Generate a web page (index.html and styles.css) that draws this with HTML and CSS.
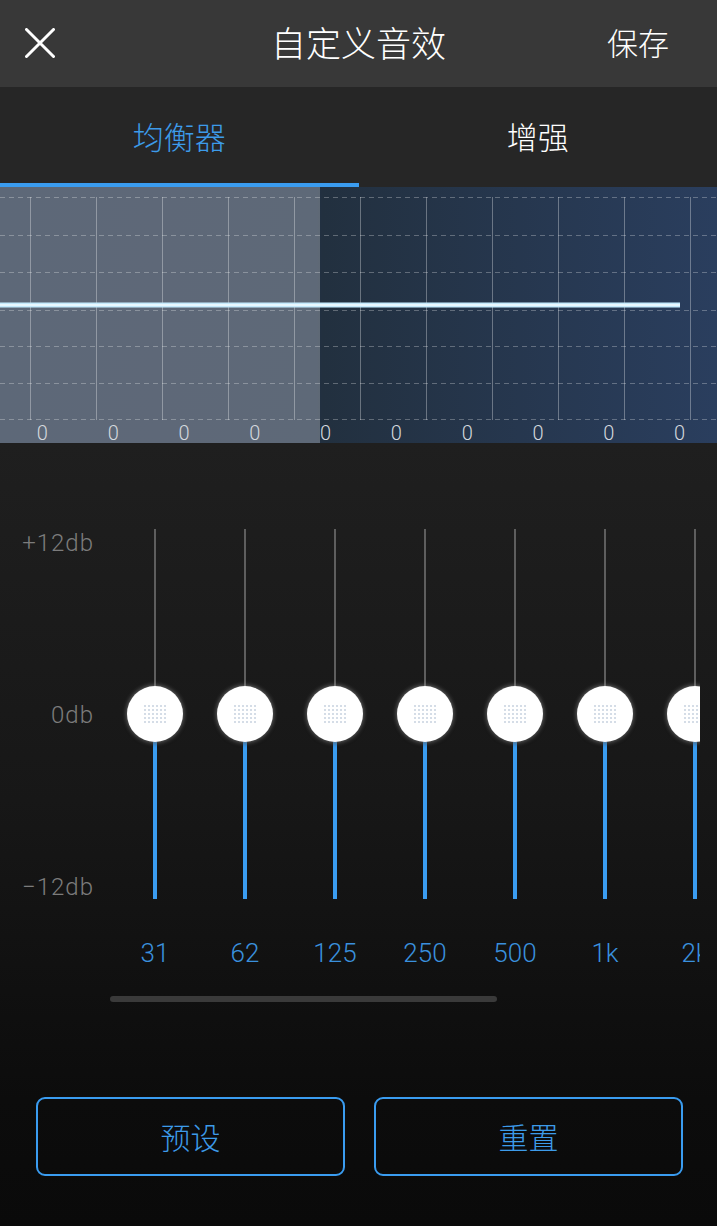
FILE: index.html
```html
<!DOCTYPE html>
<html lang="zh-CN">
<head>
<meta charset="utf-8">
<title>自定义音效</title>
<link rel="stylesheet" href="styles.css">
</head>
<body>
<div class="app">
  <header class="nav">
    <div class="nav-left">
      <svg class="close" width="30" height="30" viewBox="0 0 30 30"><path d="M1.5 1.5 L28.5 28.5 M28.5 1.5 L1.5 28.5" stroke="#fff" stroke-width="3" stroke-linecap="round" fill="none"/></svg>
    </div>
    <h1 class="title">自定义音效</h1>
    <div class="nav-right"><span class="save">保存</span></div>
  </header>

  <nav class="tabs">
    <div class="tab active">均衡器</div>
    <div class="tab">增强</div>
  </nav>

  <section class="graph">
    <svg class="graph-svg" width="717" height="256" viewBox="0 0 717 256">
      <defs>
        <linearGradient id="bg" x1="0" y1="0" x2="1" y2="0">
          <stop offset="0" stop-color="#1f2e45"/>
          <stop offset="0.44" stop-color="#213045"/>
          <stop offset="0.45" stop-color="#22303f"/>
          <stop offset="1" stop-color="#2a3e5e"/>
        </linearGradient>
      </defs>
      <rect x="0" y="0" width="717" height="256" fill="url(#bg)"/>
      <rect x="0" y="0" width="320" height="256" fill="#ffffff" fill-opacity="0.28"/>
      <g stroke="#ffffff" stroke-opacity="0.28" stroke-width="1" stroke-dasharray="5 4" fill="none">
        <line x1="0" y1="10.5" x2="717" y2="10.5"/>
        <line x1="0" y1="48.5" x2="717" y2="48.5"/>
        <line x1="0" y1="85.5" x2="717" y2="85.5"/>
        <line x1="0" y1="123.5" x2="717" y2="123.5"/>
        <line x1="0" y1="159.5" x2="717" y2="159.5"/>
        <line x1="0" y1="196.5" x2="717" y2="196.5"/>
        <line x1="0" y1="232.5" x2="717" y2="232.5"/>
      </g>
      <g stroke="#ffffff" stroke-opacity="0.32" stroke-width="1">
        <line x1="30.5" y1="10" x2="30.5" y2="233"/>
        <line x1="96.5" y1="10" x2="96.5" y2="233"/>
        <line x1="162.5" y1="10" x2="162.5" y2="233"/>
        <line x1="228.5" y1="10" x2="228.5" y2="233"/>
        <line x1="294.5" y1="10" x2="294.5" y2="233"/>
        <line x1="360.5" y1="10" x2="360.5" y2="233"/>
        <line x1="426.5" y1="10" x2="426.5" y2="233"/>
        <line x1="492.5" y1="10" x2="492.5" y2="233"/>
        <line x1="558.5" y1="10" x2="558.5" y2="233"/>
        <line x1="624.5" y1="10" x2="624.5" y2="233"/>
        <line x1="690.5" y1="10" x2="690.5" y2="233"/>
      </g>
      <rect x="0" y="115.5" width="680" height="5" fill="#c6ebfd"/>
      <rect x="0" y="117" width="680" height="2" fill="#e9f8ff"/>
    </svg>
    <div class="graph-labels">
      <span>0</span><span>0</span><span>0</span><span>0</span><span>0</span>
      <span>0</span><span>0</span><span>0</span><span>0</span><span>0</span>
    </div>
  </section>

  <section class="eq">
    <div class="axis">
      <span>+12db</span>
      <span>0db</span>
      <span>−12db</span>
    </div>
    <div class="bands-wrap">
      <div class="bands">
        <div class="band"><div class="track"><div class="up"></div><div class="down"></div><div class="knob"></div></div><div class="freq">31</div></div>
        <div class="band"><div class="track"><div class="up"></div><div class="down"></div><div class="knob"></div></div><div class="freq">62</div></div>
        <div class="band"><div class="track"><div class="up"></div><div class="down"></div><div class="knob"></div></div><div class="freq">125</div></div>
        <div class="band"><div class="track"><div class="up"></div><div class="down"></div><div class="knob"></div></div><div class="freq">250</div></div>
        <div class="band"><div class="track"><div class="up"></div><div class="down"></div><div class="knob"></div></div><div class="freq">500</div></div>
        <div class="band"><div class="track"><div class="up"></div><div class="down"></div><div class="knob"></div></div><div class="freq">1k</div></div>
        <div class="band"><div class="track"><div class="up"></div><div class="down"></div><div class="knob"></div></div><div class="freq">2k</div></div>
        <div class="band"><div class="track"><div class="up"></div><div class="down"></div><div class="knob"></div></div><div class="freq">4k</div></div>
        <div class="band"><div class="track"><div class="up"></div><div class="down"></div><div class="knob"></div></div><div class="freq">8k</div></div>
        <div class="band"><div class="track"><div class="up"></div><div class="down"></div><div class="knob"></div></div><div class="freq">16k</div></div>
      </div>
      <div class="scrollbar"><div class="thumb"></div></div>
    </div>
  </section>

  <div class="actions">
    <button class="btn">预设</button>
    <button class="btn">重置</button>
  </div>
</div>
</body>
</html>
```

FILE: styles.css
```css
html, body {
  margin: 0;
  padding: 0;
  background: #0b0b0b;
}

body {
  width: 717px;
  height: 1226px;
  overflow: hidden;
  font-family: "Noto Sans CJK SC", "Noto Sans", sans-serif;
}

.app {
  width: 717px;
  height: 1226px;
  display: flex;
  flex-direction: column;
  background: linear-gradient(to bottom, #262626 0, #262626 187px, #1f1f1f 443px, #171717 800px, #0c0c0c 1100px, #0a0a0a 1226px);
}

/* header */
.nav {
  height: 87px;
  flex: none;
  background: #383838;
  display: grid;
  grid-template-columns: 1fr auto 1fr;
  align-items: center;
}

.nav-left {
  padding-left: 25px;
  display: flex;
  align-items: center;
}

.close {
  display: block;
  margin-top: -2px;
}

.title {
  margin: 0;
  font-size: 35px;
  font-weight: 300;
  color: #ffffff;
  line-height: 1;
  margin-top: -4px;
}

.nav-right {
  display: flex;
  justify-content: flex-end;
  padding-right: 48px;
}

.save {
  font-size: 31px;
  font-weight: 300;
  color: #ffffff;
  line-height: 1;
  margin-top: -4px;
}

/* tabs */
.tabs {
  height: 100px;
  flex: none;
  display: grid;
  grid-template-columns: 1fr 1fr;
  background: #262626;
}

.tab {
  position: relative;
  display: flex;
  align-items: center;
  justify-content: center;
  font-size: 31px;
  font-weight: 300;
  color: #ffffff;
  padding-bottom: 4px;
}

.tab.active {
  color: #3d9be9;
}

.tab.active::after {
  content: "";
  position: absolute;
  left: 0;
  right: 0;
  bottom: 0;
  height: 4px;
  background: #3a9cf0;
}

/* graph */
.graph {
  position: relative;
  height: 256px;
  flex: none;
}

.graph-svg {
  display: block;
}

.graph-labels {
  position: absolute;
  left: 7px;
  top: 236px;
  display: flex;
  font-family: Roboto, "Liberation Sans", sans-serif;
  font-weight: 300;
  font-size: 20px;
  line-height: 20px;
  color: #d4d8de;
}

.graph-labels span {
  width: 70.8px;
  text-align: center;
}

/* eq */
.eq {
  display: flex;
  padding-top: 85px;
  flex: none;
}

.axis {
  width: 94px;
  height: 374px;
  display: flex;
  flex-direction: column;
  justify-content: space-between;
  align-items: flex-end;
  font-family: Roboto, "Liberation Sans", sans-serif;
  font-weight: 300;
  font-size: 24px;
  line-height: 30px;
  letter-spacing: 1px;
  color: #7c7c7c;
}

.bands-wrap {
  margin-left: 16px;
  width: 590px;
  overflow: hidden;
}

.bands {
  display: flex;
  width: 900px;
}

.band {
  width: 90px;
  flex: none;
  display: flex;
  flex-direction: column;
  align-items: center;
}

.track {
  position: relative;
  margin-top: 1px;
  height: 370px;
  width: 4px;
  display: flex;
  flex-direction: column;
  align-items: center;
}

.up {
  flex: 1;
  width: 2px;
  background: #5e5e5e;
}

.down {
  flex: 1;
  width: 4px;
  background: #3a9cf0;
}

.knob {
  position: absolute;
  top: 50%;
  left: 50%;
  width: 56px;
  height: 56px;
  margin: -28px 0 0 -28px;
  border-radius: 50%;
  background: #ffffff;
  box-shadow: 0 0 4px 1px rgba(190, 190, 190, 0.45), 0 2px 4px rgba(0, 0, 0, 0.45);
}

.knob::after {
  content: "";
  position: absolute;
  left: 16px;
  top: 18px;
  width: 24px;
  height: 20px;
  background-image: radial-gradient(circle, #d5dde7 1.1px, transparent 1.4px);
  background-size: 4px 4px;
}

.freq {
  margin-top: 39px;
  font-family: Roboto, "Liberation Sans", sans-serif;
  font-weight: 300;
  font-size: 26px;
  line-height: 30px;
  color: #3a90dd;
}

.scrollbar {
  margin-top: 28px;
  height: 6px;
  width: 590px;
}

.thumb {
  width: 387px;
  height: 6px;
  border-radius: 3px;
  background: #3a3a3a;
}

/* actions */
.actions {
  margin-top: auto;
  display: flex;
  gap: 29px;
  padding: 0 34px 50px 36px;
}

.btn {
  flex: 1;
  height: 79px;
  border: 2px solid #3a9cf0;
  border-radius: 9px;
  background: transparent;
  color: #3d9be9;
  font-family: "Noto Sans CJK SC", "Noto Sans", sans-serif;
  font-size: 30px;
  font-weight: 300;
  padding: 0;
  padding-bottom: 2px;
}
```
